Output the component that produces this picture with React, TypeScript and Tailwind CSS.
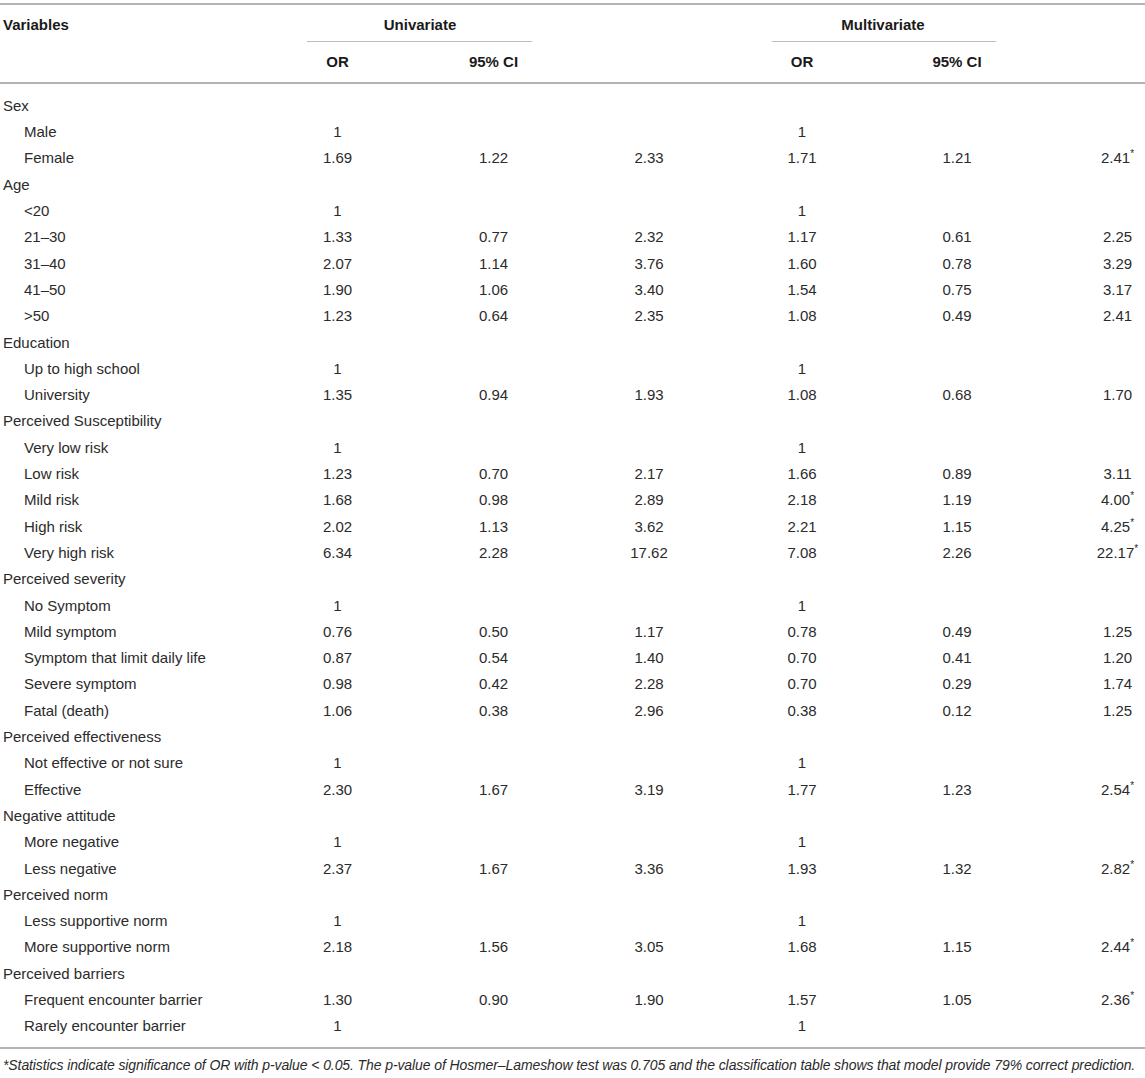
type Row = {
  label: string
  sub?: boolean
  v?: string[]
}

const rows: Row[] = [
  { label: "Sex" },
  { label: "Male", sub: true, v: ["1", "", "", "1", "", ""] },
  { label: "Female", sub: true, v: ["1.69", "1.22", "2.33", "1.71", "1.21", "2.41*"] },
  { label: "Age" },
  { label: "<20", sub: true, v: ["1", "", "", "1", "", ""] },
  { label: "21–30", sub: true, v: ["1.33", "0.77", "2.32", "1.17", "0.61", "2.25"] },
  { label: "31–40", sub: true, v: ["2.07", "1.14", "3.76", "1.60", "0.78", "3.29"] },
  { label: "41–50", sub: true, v: ["1.90", "1.06", "3.40", "1.54", "0.75", "3.17"] },
  { label: ">50", sub: true, v: ["1.23", "0.64", "2.35", "1.08", "0.49", "2.41"] },
  { label: "Education" },
  { label: "Up to high school", sub: true, v: ["1", "", "", "1", "", ""] },
  { label: "University", sub: true, v: ["1.35", "0.94", "1.93", "1.08", "0.68", "1.70"] },
  { label: "Perceived Susceptibility" },
  { label: "Very low risk", sub: true, v: ["1", "", "", "1", "", ""] },
  { label: "Low risk", sub: true, v: ["1.23", "0.70", "2.17", "1.66", "0.89", "3.11"] },
  { label: "Mild risk", sub: true, v: ["1.68", "0.98", "2.89", "2.18", "1.19", "4.00*"] },
  { label: "High risk", sub: true, v: ["2.02", "1.13", "3.62", "2.21", "1.15", "4.25*"] },
  { label: "Very high risk", sub: true, v: ["6.34", "2.28", "17.62", "7.08", "2.26", "22.17*"] },
  { label: "Perceived severity" },
  { label: "No Symptom", sub: true, v: ["1", "", "", "1", "", ""] },
  { label: "Mild symptom", sub: true, v: ["0.76", "0.50", "1.17", "0.78", "0.49", "1.25"] },
  { label: "Symptom that limit daily life", sub: true, v: ["0.87", "0.54", "1.40", "0.70", "0.41", "1.20"] },
  { label: "Severe symptom", sub: true, v: ["0.98", "0.42", "2.28", "0.70", "0.29", "1.74"] },
  { label: "Fatal (death)", sub: true, v: ["1.06", "0.38", "2.96", "0.38", "0.12", "1.25"] },
  { label: "Perceived effectiveness" },
  { label: "Not effective or not sure", sub: true, v: ["1", "", "", "1", "", ""] },
  { label: "Effective", sub: true, v: ["2.30", "1.67", "3.19", "1.77", "1.23", "2.54*"] },
  { label: "Negative attitude" },
  { label: "More negative", sub: true, v: ["1", "", "", "1", "", ""] },
  { label: "Less negative", sub: true, v: ["2.37", "1.67", "3.36", "1.93", "1.32", "2.82*"] },
  { label: "Perceived norm" },
  { label: "Less supportive norm", sub: true, v: ["1", "", "", "1", "", ""] },
  { label: "More supportive norm", sub: true, v: ["2.18", "1.56", "3.05", "1.68", "1.15", "2.44*"] },
  { label: "Perceived barriers" },
  { label: "Frequent encounter barrier", sub: true, v: ["1.30", "0.90", "1.90", "1.57", "1.05", "2.36*"] },
  { label: "Rarely encounter barrier", sub: true, v: ["1", "", "", "1", "", ""] },
]

const cols = "grid grid-cols-[260px_155px_157px_154px_152px_158px_1fr]"

function Cell({ value, last }: { value: string; last?: boolean }) {
  const star = value.endsWith("*")
  const num = star ? value.slice(0, -1) : value
  return (
    <div className={last ? "text-center pl-[54px]" : "text-center"}>
      {num}
      {star && <span className="text-[10px] align-top relative top-[-1px]">*</span>}
    </div>
  )
}

export default function App() {
  return (
    <div
      className="w-[1145px] h-[1078px] bg-white text-[#2b2b2b] pt-[3px]"
      style={{ fontFamily: '"Liberation Sans", Arial, sans-serif' }}
    >
      <div className="border-t-2 border-[#b3b3b3]">
        {/* header row 1 */}
        <div className={`${cols} h-[37px] items-center text-[15px] font-bold text-[#1a1a1a]`}>
          <div className="pl-[3px] pt-[3px]">Variables</div>
          <div className="col-span-2 h-full flex flex-col">
            <div className="flex-1 flex items-center justify-center pl-[8px] pt-[4px]">Univariate</div>
            <div className="ml-[47px] mr-[40px] border-b border-[#bdbdbd]" />
          </div>
          <div />
          <div className="col-span-2 h-full flex flex-col">
            <div className="flex-1 flex items-center justify-center pl-[4px] pt-[4px]">Multivariate</div>
            <div className="ml-[46px] mr-[40px] border-b border-[#bdbdbd]" />
          </div>
          <div />
        </div>
        {/* header row 2 */}
        <div className={`${cols} h-[42px] items-center text-[15px] font-bold text-[#1a1a1a] border-b-2 border-[#b3b3b3]`}>
          <div />
          <div className="text-center">OR</div>
          <div className="text-center">95% CI</div>
          <div />
          <div className="text-center">OR</div>
          <div className="text-center">95% CI</div>
          <div />
        </div>
      </div>

      <div className="pt-[9px] pb-[7px] border-b-2 border-[#b3b3b3] text-[15px]">
        {rows.map((r, i) => (
          <div key={i} className={`${cols} h-[26.3px] items-center`}>
            <div className={r.sub ? "pl-[24px] whitespace-nowrap" : "pl-[3px] whitespace-nowrap"}>{r.label}</div>
            {r.v
              ? r.v.map((v, j) => <Cell key={j} value={v} last={j === 5} />)
              : [0, 1, 2, 3, 4, 5].map((j) => <div key={j} />)}
          </div>
        ))}
      </div>

      <p className="pt-[6px] pl-[3px] text-[14px] italic tracking-[-0.1px] whitespace-nowrap text-[#2b2b2b]">
        *Statistics indicate significance of OR with p-value &lt; 0.05. The p-value of Hosmer–Lameshow test was 0.705 and the classification table shows that model provide 79% correct prediction.
      </p>
    </div>
  )
}
